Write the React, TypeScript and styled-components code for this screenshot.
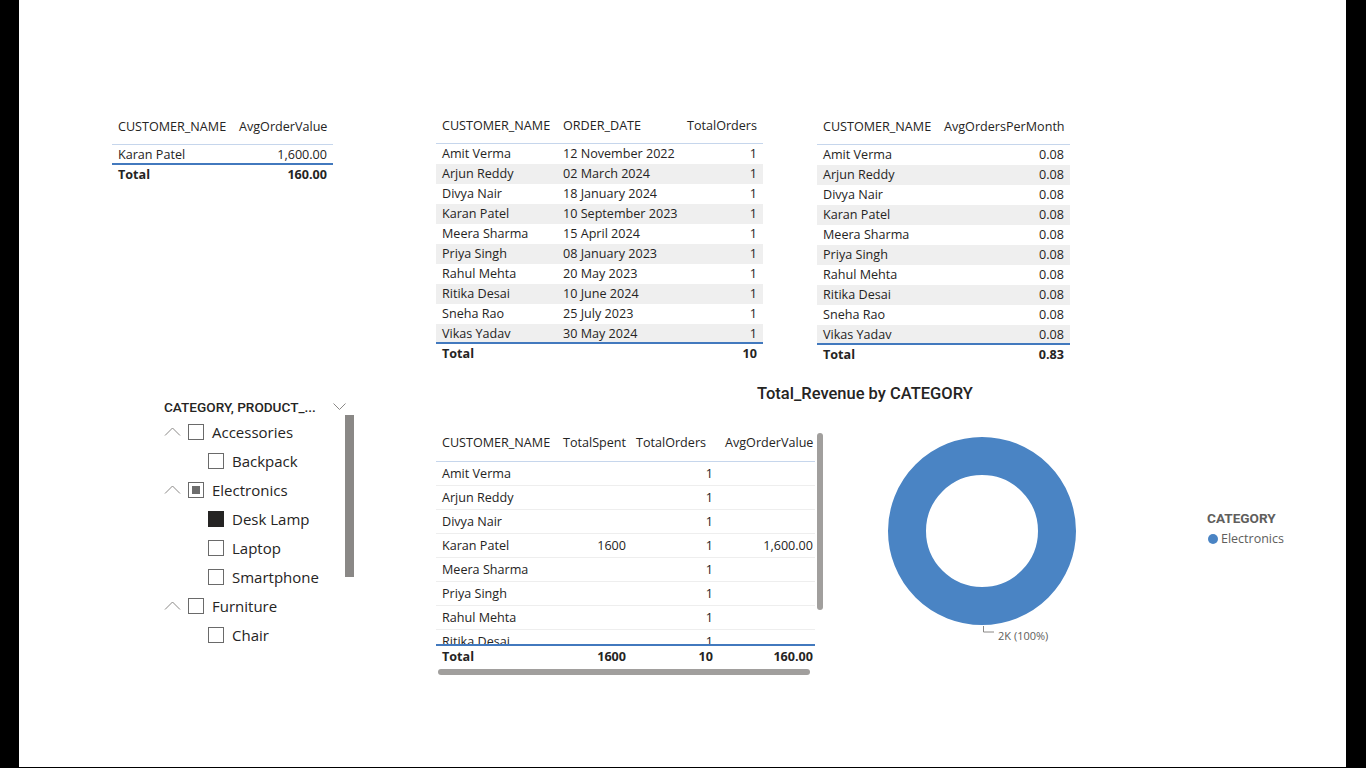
import React from "react";
import styled, { createGlobalStyle } from "styled-components";

const Global = createGlobalStyle`
  html, body { margin: 0; padding: 0; background: #000; }
  body { font-family: "Open Sans", "Noto Sans", sans-serif; color: #252423; }
  #root { width: 1366px; height: 768px; overflow: hidden; }
`;

const Canvas = styled.div`
  margin-left: 19px;
  width: 1327px;
  height: 767px;
  background: #fff;
  display: flex;
  flex-direction: column;
`;

const TopRow = styled.div`
  display: flex;
  align-items: flex-start;
  padding: 116px 0 0 93px;
`;

const TableBox = styled.div<{ $w: number; $ml?: number; $mt?: number }>`
  width: ${(p) => p.$w}px;
  margin-left: ${(p) => p.$ml ?? 0}px;
  margin-top: ${(p) => p.$mt ?? 0}px;
  font-size: 12.6px;
`;

const Row = styled.div<{ $cols: string; $shade?: boolean }>`
  display: grid;
  grid-template-columns: ${(p) => p.$cols};
  line-height: 20px;
  height: 20px;
  background: ${(p) => (p.$shade ? "#efefef" : "transparent")};
  white-space: nowrap;
`;

const HeadRow = styled(Row)`
  height: auto;
  padding-bottom: 7px;
  border-bottom: 1px solid #c6d6ec;
`;

const TotalRow = styled(Row)`
  border-top: 2px solid #4279be;
  font-weight: 700;
  margin-top: -2px;
`;

const Cell = styled.div<{ $right?: boolean }>`
  padding: 0 6px;
  text-align: ${(p) => (p.$right ? "right" : "left")};
  overflow: hidden;
`;

const customers = [
  ["Amit Verma", "12 November 2022"],
  ["Arjun Reddy", "02 March 2024"],
  ["Divya Nair", "18 January 2024"],
  ["Karan Patel", "10 September 2023"],
  ["Meera Sharma", "15 April 2024"],
  ["Priya Singh", "08 January 2023"],
  ["Rahul Mehta", "20 May 2023"],
  ["Ritika Desai", "10 June 2024"],
  ["Sneha Rao", "25 July 2023"],
  ["Vikas Yadav", "30 May 2024"],
];

/* ---------- bottom ---------- */

const BottomRow = styled.div`
  display: flex;
  align-items: flex-start;
  margin-top: 17px;
  padding-left: 145px;
`;

const Slicer = styled.div`
  width: 190px;
  margin-top: 14px;
`;

const SlicerHead = styled.div`
  display: flex;
  align-items: center;
  justify-content: space-between;
  height: 22px;
  font-family: Roboto, sans-serif;
  font-weight: 500;
  font-size: 13.6px;
  color: #252423;
  padding-right: 8px;
`;

const SlicerBody = styled.div`
  display: flex;
  align-items: flex-start;
  margin-top: -1px;
`;

const SlicerList = styled.div`
  width: 181px;
`;

const SlicerItem = styled.div<{ $level: number }>`
  display: flex;
  align-items: center;
  height: 29px;
  padding-left: ${(p) => (p.$level === 0 ? 0 : 44)}px;
  font-size: 15px;
  color: #252423;
`;

const Expander = styled.span`
  width: 24px;
  display: flex;
  align-items: center;
`;

const Check = styled.span<{ $state: "none" | "part" | "full" }>`
  width: 16px;
  height: 16px;
  box-sizing: border-box;
  border: 1px solid ${(p) => (p.$state === "full" ? "#252423" : "#6a6a6a")};
  background: ${(p) => (p.$state === "full" ? "#252423" : "#fff")};
  margin-right: 8px;
  display: flex;
  align-items: center;
  justify-content: center;
  &::after {
    content: "";
    width: 8px;
    height: 8px;
    background: ${(p) => (p.$state === "part" ? "#6e6e6e" : "transparent")};
  }
`;

const SlicerThumb = styled.div`
  width: 9px;
  height: 162px;
  background: #8a8886;
  margin-top: -2px;
`;

const RightArea = styled.div`
  display: flex;
  flex-direction: column;
  margin-left: 82px;
`;

const ChartTitle = styled.div`
  padding-left: 321px;
  font-family: Roboto, sans-serif;
  font-weight: 500;
  font-size: 16.5px;
  line-height: 24px;
  color: #252423;
`;

const RightRow = styled.div`
  display: flex;
  align-items: flex-start;
  margin-top: 26px;
`;

const Table4 = styled.div`
  display: flex;
  align-items: flex-start;
  font-size: 12.6px;
`;

const Table4Main = styled.div`
  width: 379px;
  display: flex;
  flex-direction: column;
`;

const Row4Head = styled.div`
  display: grid;
  grid-template-columns: 121px 75px 87px 96px;
  line-height: 20px;
  padding: 1px 0 8px;
  border-bottom: 1px solid #c6d6ec;
  white-space: nowrap;
`;

const Body4 = styled.div`
  height: 182px;
  overflow: hidden;
`;

const Row4 = styled.div`
  display: grid;
  grid-template-columns: 121px 75px 87px 96px;
  height: 24px;
  line-height: 24px;
  border-bottom: 1px solid #eeeeee;
  box-sizing: border-box;
  white-space: nowrap;
`;

const Total4 = styled(Row4)`
  border-bottom: none;
  border-top: 2px solid #4279be;
  font-weight: 700;
  height: 24px;
  line-height: 22px;
`;

const Cell4 = styled.div<{ $right?: boolean; $pr?: number }>`
  padding: 0 ${(p) => p.$pr ?? 6}px 0 6px;
  text-align: ${(p) => (p.$right ? "right" : "left")};
`;

const HeadCell4 = styled(Cell4)<{ $ml?: number }>`
  margin-left: ${(p) => p.$ml ?? 0}px;
`;

const HScroll = styled.div`
  width: 372px;
  height: 6px;
  border-radius: 3px;
  background: #a19f9d;
  margin: 1px 0 0 2px;
`;

const VScroll = styled.div`
  width: 6px;
  height: 177px;
  border-radius: 3px;
  background: #a19f9d;
  margin: 1px 0 0 2px;
`;

const DonutWrap = styled.div`
  margin: 5px 0 0 65px;
`;

const Legend = styled.div`
  margin: 77px 0 0 129px;
  display: flex;
  flex-direction: column;
`;

const LegendTitle = styled.div`
  font-family: Roboto, sans-serif;
  font-weight: 700;
  font-size: 13.6px;
  color: #605e5c;
  line-height: 18px;
`;

const LegendItem = styled.div`
  display: flex;
  align-items: center;
  font-size: 12.5px;
  color: #605e5c;
  line-height: 18px;
  margin-top: 3px;
  &::before {
    content: "";
    width: 10px;
    height: 10px;
    border-radius: 50%;
    background: #4a84c4;
    margin: 0 3px 0 1px;
  }
`;

const ChevronUp = () => (
  <svg width="17" height="9" viewBox="0 0 17 9">
    <path d="M1 8.5 L8.5 1 L16 8.5" fill="none" stroke="#8a8886" strokeWidth="1" />
  </svg>
);

const ChevronDown = () => (
  <svg width="13" height="8" viewBox="0 0 13 8">
    <path d="M0.5 0.5 L6.5 6.5 L12.5 0.5" fill="none" stroke="#8a8886" strokeWidth="1" />
  </svg>
);

const slicerItems: { label: string; level: number; state: "none" | "part" | "full" }[] = [
  { label: "Accessories", level: 0, state: "none" },
  { label: "Backpack", level: 1, state: "none" },
  { label: "Electronics", level: 0, state: "part" },
  { label: "Desk Lamp", level: 1, state: "full" },
  { label: "Laptop", level: 1, state: "none" },
  { label: "Smartphone", level: 1, state: "none" },
  { label: "Furniture", level: 0, state: "none" },
  { label: "Chair", level: 1, state: "none" },
];

export default function App() {
  return (
    <>
      <Global />
      <Canvas>
        <TopRow>
          <TableBox $w={221} $mt={1}>
            <HeadRow $cols="121px 100px">
              <Cell>CUSTOMER_NAME</Cell>
              <Cell $right>AvgOrderValue</Cell>
            </HeadRow>
            <Row $cols="121px 100px">
              <Cell>Karan Patel</Cell>
              <Cell $right>1,600.00</Cell>
            </Row>
            <TotalRow $cols="121px 100px">
              <Cell>Total</Cell>
              <Cell $right>160.00</Cell>
            </TotalRow>
          </TableBox>

          <TableBox $w={327} $ml={103}>
            <HeadRow $cols="121px 123px 83px">
              <Cell>CUSTOMER_NAME</Cell>
              <Cell>ORDER_DATE</Cell>
              <Cell $right>TotalOrders</Cell>
            </HeadRow>
            {customers.map(([n, d], i) => (
              <Row key={n} $cols="121px 123px 83px" $shade={i % 2 === 1}>
                <Cell>{n}</Cell>
                <Cell>{d}</Cell>
                <Cell $right>1</Cell>
              </Row>
            ))}
            <TotalRow $cols="121px 123px 83px">
              <Cell>Total</Cell>
              <Cell />
              <Cell $right>10</Cell>
            </TotalRow>
          </TableBox>

          <TableBox $w={253} $ml={54} $mt={1}>
            <HeadRow $cols="121px 132px">
              <Cell>CUSTOMER_NAME</Cell>
              <Cell $right>AvgOrdersPerMonth</Cell>
            </HeadRow>
            {customers.map(([n], i) => (
              <Row key={n} $cols="121px 132px" $shade={i % 2 === 1}>
                <Cell>{n}</Cell>
                <Cell $right>0.08</Cell>
              </Row>
            ))}
            <TotalRow $cols="121px 132px">
              <Cell>Total</Cell>
              <Cell $right>0.83</Cell>
            </TotalRow>
          </TableBox>
        </TopRow>

        <BottomRow>
          <Slicer>
            <SlicerHead>
              <span>CATEGORY, PRODUCT_...</span>
              <ChevronDown />
            </SlicerHead>
            <SlicerBody>
              <SlicerList>
                {slicerItems.map((it) => (
                  <SlicerItem key={it.label} $level={it.level}>
                    {it.level === 0 && (
                      <Expander>
                        <ChevronUp />
                      </Expander>
                    )}
                    <Check $state={it.state} />
                    {it.label}
                  </SlicerItem>
                ))}
              </SlicerList>
              <SlicerThumb />
            </SlicerBody>
          </Slicer>

          <RightArea>
            <ChartTitle>Total_Revenue by CATEGORY</ChartTitle>
            <RightRow>
              <Table4>
                <Table4Main>
                  <Row4Head>
                    <HeadCell4>CUSTOMER_NAME</HeadCell4>
                    <HeadCell4>TotalSpent</HeadCell4>
                    <HeadCell4 $ml={-2}>TotalOrders</HeadCell4>
                    <HeadCell4 $right $pr={2}>AvgOrderValue</HeadCell4>
                  </Row4Head>
                  <Body4>
                    {customers.map(([n]) => (
                      <Row4 key={n}>
                        <Cell4>{n}</Cell4>
                        <Cell4 $right>{n === "Karan Patel" ? "1600" : ""}</Cell4>
                        <Cell4 $right>1</Cell4>
                        <Cell4 $right $pr={2}>{n === "Karan Patel" ? "1,600.00" : ""}</Cell4>
                      </Row4>
                    ))}
                  </Body4>
                  <Total4>
                    <Cell4>Total</Cell4>
                    <Cell4 $right>1600</Cell4>
                    <Cell4 $right>10</Cell4>
                    <Cell4 $right $pr={2}>160.00</Cell4>
                  </Total4>
                  <HScroll />
                </Table4Main>
                <VScroll />
              </Table4>

              <DonutWrap>
                <svg width="190" height="210" viewBox="0 0 190 210">
                  <circle cx="94" cy="94" r="75" fill="none" stroke="#4a84c4" strokeWidth="38" />
                  <path d="M95.5 189 V195 H106" fill="none" stroke="#8a8886" strokeWidth="1" />
                  <text x="110" y="203" fontFamily="Open Sans, sans-serif" fontSize="11" fill="#605e5c">
                    2K (100%)
                  </text>
                </svg>
              </DonutWrap>

              <Legend>
                <LegendTitle>CATEGORY</LegendTitle>
                <LegendItem>Electronics</LegendItem>
              </Legend>
            </RightRow>
          </RightArea>
        </BottomRow>
      </Canvas>
    </>
  );
}
